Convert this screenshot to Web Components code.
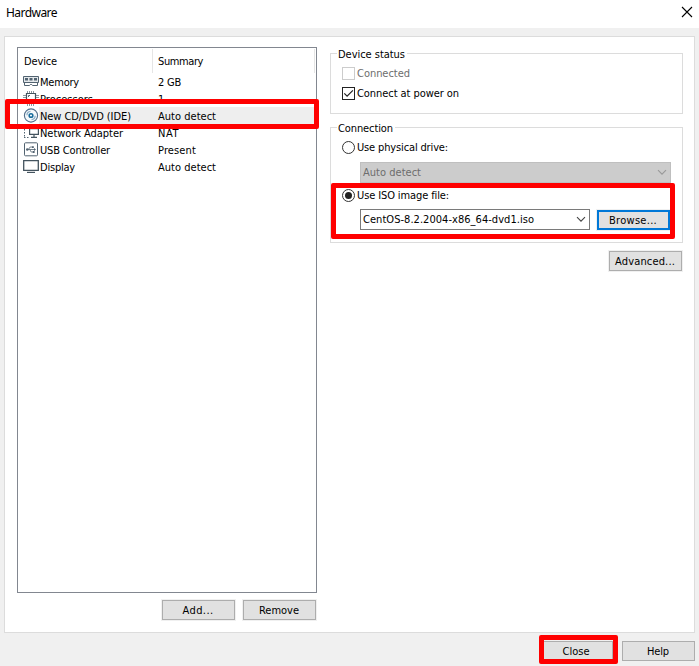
<!DOCTYPE html>
<html lang="en"><head><meta charset="utf-8"><title>Hardware</title>
<style>html,body{margin:0;width:699px;height:666px;overflow:hidden;background:#f0f0f0}</style></head>
<body><hardware-dialog></hardware-dialog>
<script>
const FONT = '"DejaVu Sans Condensed","DejaVu Sans",sans-serif';
class Base extends HTMLElement {
  render(html) { this.attachShadow({mode:'open'}).innerHTML = html; }
}
/* A line of text tracked to a fixed width (w, in px). */
customElements.define('ui-text', class extends Base {
  connectedCallback() {
    this.render(`<style>:host{display:inline-block;white-space:nowrap;line-height:17px;height:17px;flex:none}span{display:inline-block}</style><span><slot></slot></span>`);
    const w = +this.getAttribute('w'), s = this.shadowRoot.querySelector('span'), n = this.textContent.length;
    if (w && n > 1) s.style.letterSpacing = ((w - s.getBoundingClientRect().width) / n) + 'px';
    if (w) this.style.width = w + 'px';
  }
});
customElements.define('ui-button', class extends Base {
  connectedCallback() {
    this.render(`<style>:host{display:flex;flex:none;box-sizing:border-box;width:73px;height:20px;border:1px solid #adadad;background:#e1e1e1;box-shadow:0 0 0 1px #f0f0f0;align-items:center;justify-content:center;padding-right:1px}
    :host([focused]){border:2px solid #0078d7}</style><slot></slot>`);
  }
});
customElements.define('ui-check', class extends Base {
  connectedCallback() {
    const on = this.hasAttribute('checked');
    this.render(`<style>:host{display:flex;gap:2px;height:19px;margin-bottom:1px;align-items:center;color:#000}:host([disabled]){color:#6d6d6d}
    i{box-sizing:border-box;width:13px;height:13px;border:1px solid #222;background:#fff;display:block}:host([disabled]) i{border-color:#ccc}svg{display:block}</style>
    <i>${on ? '<svg width="11" height="11"><path d="M1.3 5.3 4.1 8.1 9.9 2.4" fill="none" stroke="#222" stroke-width="1.2"/></svg>' : ''}</i><slot></slot>`);
  }
});
customElements.define('ui-radio', class extends Base {
  connectedCallback() {
    this.render(`<style>:host{display:flex;gap:2px;height:17px;align-items:center}svg{display:block}</style>
    <svg width="13" height="13"><circle cx="6.5" cy="6.5" r="6" fill="#fff" stroke="#333"/>${this.hasAttribute('checked') ? '<circle cx="6.5" cy="6.5" r="3.5" fill="#222"/>' : ''}</svg><slot></slot>`);
  }
});
customElements.define('ui-combo', class extends Base {
  connectedCallback() {
    this.render(`<style>:host{display:flex;box-sizing:border-box;height:21px;border:1px solid #7a7a7a;background:#fff;align-items:center;justify-content:space-between;padding:0 3px 0 2px;flex:none;color:#000;--c:#444}
    :host([disabled]){background:#ccc;border-color:#bfbfbf;color:#6d6d6d;--c:#999}</style><slot></slot>
    <svg width="10" height="7"><path d="M1 1.2 5 5.2 9 1.2" fill="none" stroke="var(--c)" stroke-width="1.1"/></svg>`);
  }
});
customElements.define('ui-group', class extends Base {
  connectedCallback() {
    this.render(`<style>:host{display:block;box-sizing:border-box;border:1px solid #dcdcdc;width:353px}
    header{margin:-8px 0 0 6px;height:17px;display:flex}header div{background:#fff;padding:0 2px 0 1px}</style>
    <header><div><slot name="legend"></slot></div></header><slot></slot>`);
  }
});
const ICONS = {
  memory:'<path d="M.5 2.5h15v6H.5z" fill="#e4e8eb" stroke="#526371"/><path d="M2 4h3v2.5H2zM6.500 4h3v2.5h-3zM11 4h3v2.5h-3z" fill="#526371"/><path d="M1.500 9v2.500h5l.8-1h1.400l.8 1h5V9" fill="#fff" stroke="#526371"/>',
  cpu:'<path d="M4.500 0v3M6.500 0v3M8.500 0v3M10.500 0v3M4.500 12v3M6.500 12v3M8.500 12v3M10.500 12v3M0 4.500h3M0 6.500h3M0 8.500h3M0 10.500h3M13 4.500h3M13 6.500h3M13 8.500h3M13 10.500h3" stroke="#8b979f"/><path d="M3.500 2.500h9v10h-9z" fill="#fff" stroke="#44545f" stroke-width="1.200"/><path d="M5.500 6V4.500H7" stroke="#526371" fill="none"/>',
  disc:'<circle cx="8" cy="7.5" r="6.6" fill="#f4f8fb" stroke="#526f8c" stroke-width="1.1"/><circle cx="8" cy="7.5" r="1.8" fill="#fff" stroke="#176b9c" stroke-width="1.6"/><path d="M3.900 7.200A4 4 0 0 1 7.500 3.400M8.500 11.600A4 4 0 0 0 12.200 7.800" fill="none" stroke="#8fb0c8" stroke-width="1.3"/>',
  net:'<path d="M1.500 1v11M1 1.500h6M1 12.500h6" fill="none" stroke="#526371" stroke-dasharray="1.500 1.500"/><path d="M6.600 3.600h8.800v5.800H6.600zM11 9.500v2.500M8 12.400h6" fill="#fff" stroke="#44545f" stroke-width="1.200"/>',
  usb:'<rect x="1.500" y=".8" width="13" height="13" rx="1" fill="#fff" stroke="#526371"/><path d="M3.500 7.500h8M5.500 7.300 7.200 5h2M6.800 7.500 8.200 10h2" fill="none" stroke="#65747f" stroke-width=".9"/><circle cx="4.300" cy="7.500" r="1.300" fill="#526371"/><path d="m11 6 2 1.500-2 1.500zM9 4.200h1.800V6H9zM9.800 9.100h1.800v1.800H9.800z" fill="#526371"/>',
  display:'<path d="M.7 1.700h14.600v9.600H.7z" fill="#fff" stroke="#44545f" stroke-width="1.300"/><path d="M4 13.400h8" stroke="#44545f" stroke-width="1.200"/>'
};
customElements.define('device-row', class extends Base {
  connectedCallback() {
    this.render(`<style>:host{display:grid;grid-template-columns:16px 119px 1fr;height:17px;margin:0 1px 0 5px;align-items:center}
    svg{display:block;width:16px;height:15px}div{box-sizing:border-box;height:17px;padding:1px 0 0 1px}div+div{padding-left:0}:host([selected]) div{background:#eee}</style>
    <svg viewBox="0 0 16 15">${ICONS[this.getAttribute('icon')]}</svg><div><slot name="name"></slot></div><div><slot></slot></div>`);
  }
});
/* Red frame drawn over the parts of the dialog to look at. */
customElements.define('red-frame', class extends Base {
  connectedCallback() {
    this.render(`<style>:host{position:absolute;box-sizing:border-box;border:5px solid #f00;border-radius:2px;pointer-events:none}</style>`);
  }
});
const row = (icon, name, w, sum, sw, x='') => `<device-row icon="${icon}" ${x}><ui-text slot="name" w="${w}">${name}</ui-text><ui-text w="${sw}">${sum}</ui-text></device-row>`;
customElements.define('hardware-dialog', class extends Base {
  connectedCallback() {
    this.render(`<style>
    :host{display:flex;flex-direction:column;position:relative;width:699px;height:666px;background:#f0f0f0;font:11px ${FONT};color:#000}
    .title{height:28px;background:#fff;display:flex;justify-content:space-between;align-items:center;padding:0 6px;box-sizing:border-box;font:12px "Noto Sans","Open Sans",sans-serif;padding-bottom:3px}
    .title svg{margin-top:-1px}
    .panel{margin:8px 4px 0;box-sizing:border-box;width:691px;height:597px;border:1px solid #dcdcdc;background:#fff;display:flex;padding:10px 0 0 12px;gap:13px}
    .list{box-sizing:border-box;width:300px;height:546px;border:1px solid #828790}
    .head{display:grid;grid-template-columns:135px 1fr;height:25px;padding-top:1px;box-sizing:border-box}
    .head div{height:24px;border-right:1px solid #e5e5e5;padding:4px 0 0 6px;box-sizing:border-box}
    .head div+div{margin-right:1px;padding-left:5px}
    .lb{display:flex;justify-content:flex-end;gap:8px;margin:7px 1px 0 0}
    .right{padding-top:6px;width:353px}
    .g1{height:61px}.g2{height:116px;margin-top:13px}
    .checks{padding:1px 0 0 11px}.con{padding:2px 0 0 11px}
    .con ui-combo{margin-left:18px}.big{width:311px;margin-top:6px}.mid{width:230px}
    .line{display:flex;gap:7px;margin-top:5px;align-items:flex-start}.line ui-button{margin-top:1px}
    .r2{margin-top:4px}.adv{display:flex;justify-content:flex-end;margin:8px 1px 0 0}
    .foot{display:flex;justify-content:flex-end;gap:9px;padding:8px 4px 0 0}
    </style>
    <div class="title"><ui-text w="51">Hardware</ui-text><svg width="12" height="12"><path d="m1 1 10 10M11 1 1 11" stroke="#000" stroke-width="1.1"/></svg></div>
    <div class="panel"><div><div class="list">
      <div class="head"><div><ui-text w="33">Device</ui-text></div><div><ui-text w="45">Summary</ui-text></div></div>
      <div class="rows">
      ${row('memory','Memory',39,'2 GB',23)}${row('cpu','Processors',53,'1',6)}${row('disc','New CD/DVD (IDE)',91,'Auto detect',58,'selected')}
      ${row('net','Network Adapter',83,'NAT',21)}${row('usb','USB Controller',70,'Present',38)}${row('display','Display',35,'Auto detect',58)}
      </div></div>
      <div class="lb"><ui-button><ui-text w="31">Add...</ui-text></ui-button><ui-button><ui-text w="40">Remove</ui-text></ui-button></div></div>
      <div class="right">
        <ui-group class="g1"><ui-text slot="legend" w="67">Device status</ui-text><div class="checks">
          <ui-check disabled><ui-text w="53">Connected</ui-text></ui-check><ui-check checked><ui-text w="102">Connect at power on</ui-text></ui-check></div></ui-group>
        <ui-group class="g2"><ui-text slot="legend" w="55">Connection</ui-text><div class="con">
          <ui-radio><ui-text w="91">Use physical drive:</ui-text></ui-radio>
          <ui-combo disabled class="big"><ui-text w="58">Auto detect</ui-text></ui-combo>
          <ui-radio checked class="r2"><ui-text w="92">Use ISO image file:</ui-text></ui-radio>
          <div class="line"><ui-combo class="mid"><ui-text w="171">CentOS-8.2.2004-x86_64-dvd1.iso</ui-text></ui-combo><ui-button focused><ui-text w="48">Browse...</ui-text></ui-button></div>
        </div></ui-group>
        <div class="adv"><ui-button><ui-text w="60">Advanced...</ui-text></ui-button></div>
      </div></div>
    <div class="foot"><ui-button><ui-text w="27">Close</ui-text></ui-button><ui-button><ui-text w="22">Help</ui-text></ui-button></div>
    <red-frame style="left:5px;top:99px;width:314px;height:30px"></red-frame>
    <red-frame style="left:331px;top:183px;width:344px;height:56px"></red-frame>
    <red-frame style="left:539px;top:635px;width:79px;height:29px"></red-frame>`);
  }
});
</script></body></html>
